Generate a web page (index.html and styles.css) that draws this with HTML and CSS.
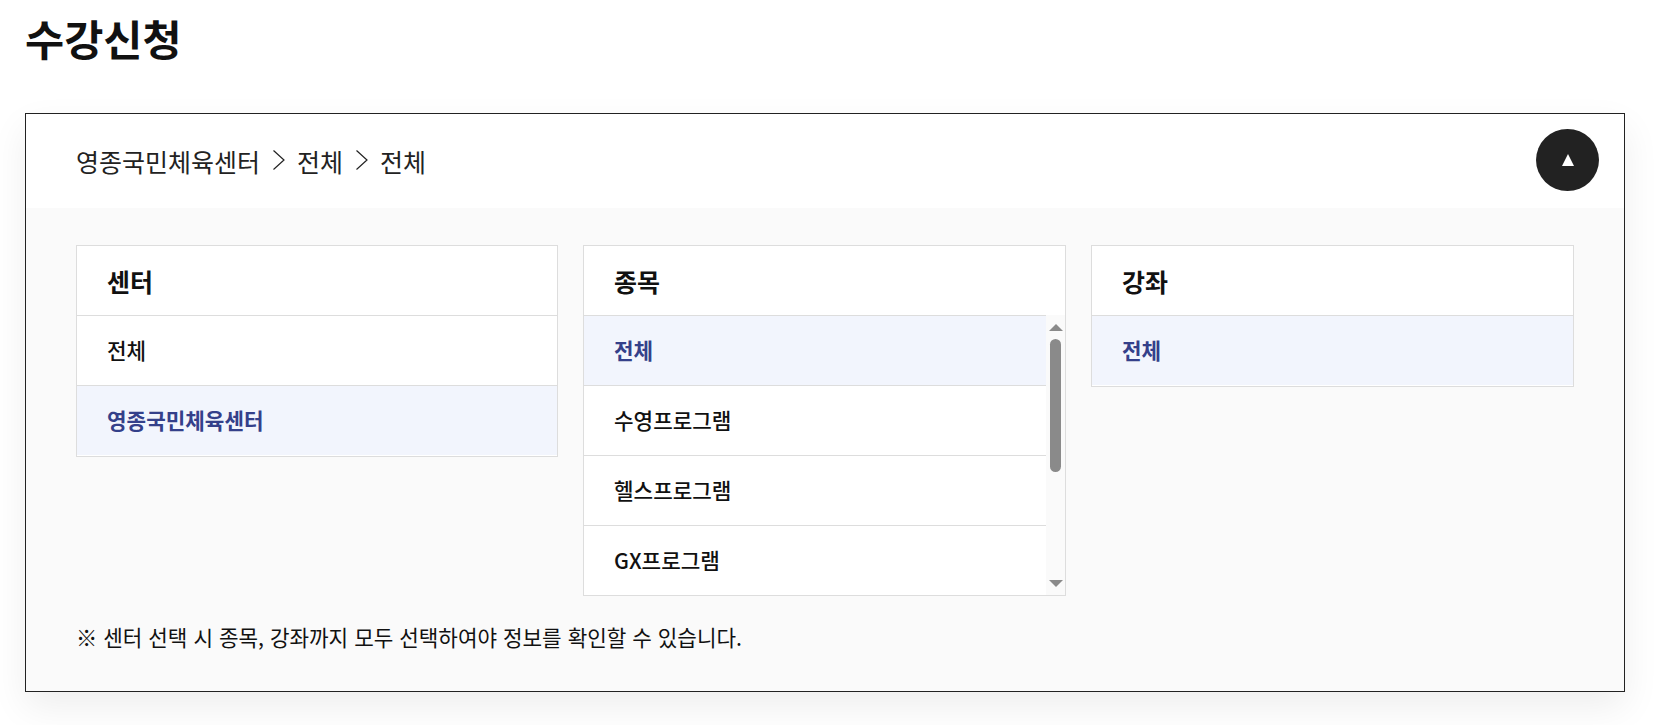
FILE: index.html
```html
<!DOCTYPE html>
<html lang="ko">
<head>
<meta charset="utf-8">
<title>수강신청</title>
<link rel="stylesheet" href="styles.css">
</head>
<body>
<main class="page">
  <h1 class="title">수강신청</h1>
  <section class="panel">
    <header class="crumbs">
      <span>영종국민체육센터</span>
      <svg class="chev" viewBox="0 0 12 20"><path d="M.5.5 11 10 .5 19.500" fill="none" stroke="#222" stroke-width="1.200"/></svg>
      <span>전체</span>
      <svg class="chev" viewBox="0 0 12 20"><path d="M.5.5 11 10 .5 19.500" fill="none" stroke="#222" stroke-width="1.200"/></svg>
      <span>전체</span>
      <button class="toggle" type="button"><span class="tri"></span></button>
    </header>
    <div class="body">
      <div class="cols">
        <div class="col">
          <h2 class="col-head">센터</h2>
          <ul class="list">
            <li class="item">전체</li>
            <li class="item on">영종국민체육센터</li>
          </ul>
        </div>
        <div class="col">
          <h2 class="col-head">종목</h2>
          <div class="scroller">
            <ul class="list clip">
              <li class="item on">전체</li>
              <li class="item">수영프로그램</li>
              <li class="item">헬스프로그램</li>
              <li class="item">GX프로그램</li>
            </ul>
            <div class="bar">
              <span class="arrow up"></span>
              <span class="thumb"></span>
              <span class="arrow down"></span>
            </div>
          </div>
        </div>
        <div class="col">
          <h2 class="col-head">강좌</h2>
          <ul class="list">
            <li class="item on">전체</li>
          </ul>
        </div>
      </div>
      <p class="note">※ 센터 선택 시 종목, 강좌까지 모두 선택하여야 정보를 확인할 수 있습니다.</p>
    </div>
  </section>
</main>
</body>
</html>
```
FILE: styles.css
```css
* { box-sizing: border-box; }
html, body { margin: 0; padding: 0; background: #fff; }
body { font-family: "Noto Sans CJK KR", "Noto Sans", sans-serif; color: #111; overflow: hidden; }
.page { height: 725px; padding: 0 38px 0 25px; }
.title { margin: 0; height: 113px; padding-top: 8px; font-size: 42.56px; line-height: 60px; font-weight: 700; color: #111; }
.panel { width: 1600px; height: 579px; border: 1px solid #222; background: #fff; box-shadow: 0 15px 35px rgba(0,0,0,.07); display: flex; flex-direction: column; }
.crumbs { height: 94px; flex: none; display: flex; align-items: center; padding-left: 50px; font-size: 25px; color: #222; }
.chev { width: 12px; height: 20px; margin: 0 12px 2px 13px; }
.toggle { margin: 0 25px 3px auto; width: 63px; height: 62px; border: 0; border-radius: 50%; background: #222; display: flex; align-items: center; justify-content: center; padding: 0; }
.tri { width: 0; height: 0; border-left: 6px solid transparent; border-right: 6px solid transparent; border-bottom: 12px solid #fff; }
.body { flex: 1; background: #fafafa; padding: 37px 50px 0; }
.cols { display: grid; grid-template-columns: 482px 483px 483px; column-gap: 25px; align-items: start; }
.col { border: 1px solid #ddd; background: #fff; }
.col-head { margin: 0; height: 69px; padding-left: 30px; display: flex; align-items: center; font-size: 25px; font-weight: 700; color: #111; }
.list { list-style: none; margin: 0; padding: 0 0 1px; }
.item { height: 70px; padding: 0 0 3px 30px; display: flex; align-items: center; border-top: 1px solid #ddd; font-size: 21.28px; font-weight: 500; color: #111; }
.item.on { background: #f2f5fd; color: #34408a; font-weight: 700; }
.scroller { display: flex; height: 280px; overflow: hidden; }
.clip { flex: 1; min-width: 0; }
.bar { flex: none; width: 19px; background: #fafafa; display: flex; flex-direction: column; align-items: center; padding-top: 9px; }
.arrow { width: 0; height: 0; border-left: 7px solid transparent; border-right: 7px solid transparent; }
.arrow.up { border-bottom: 7px solid #8a8a8a; }
.arrow.down { border-top: 7px solid #8a8a8a; margin-top: auto; margin-bottom: 8px; }
.thumb { width: 11px; height: 133px; margin-top: 8px; border-radius: 6px; background: #8a8a8a; }
.note { margin: 24px 0 0; font-size: 21.28px; line-height: 34px; color: #111; }
```
